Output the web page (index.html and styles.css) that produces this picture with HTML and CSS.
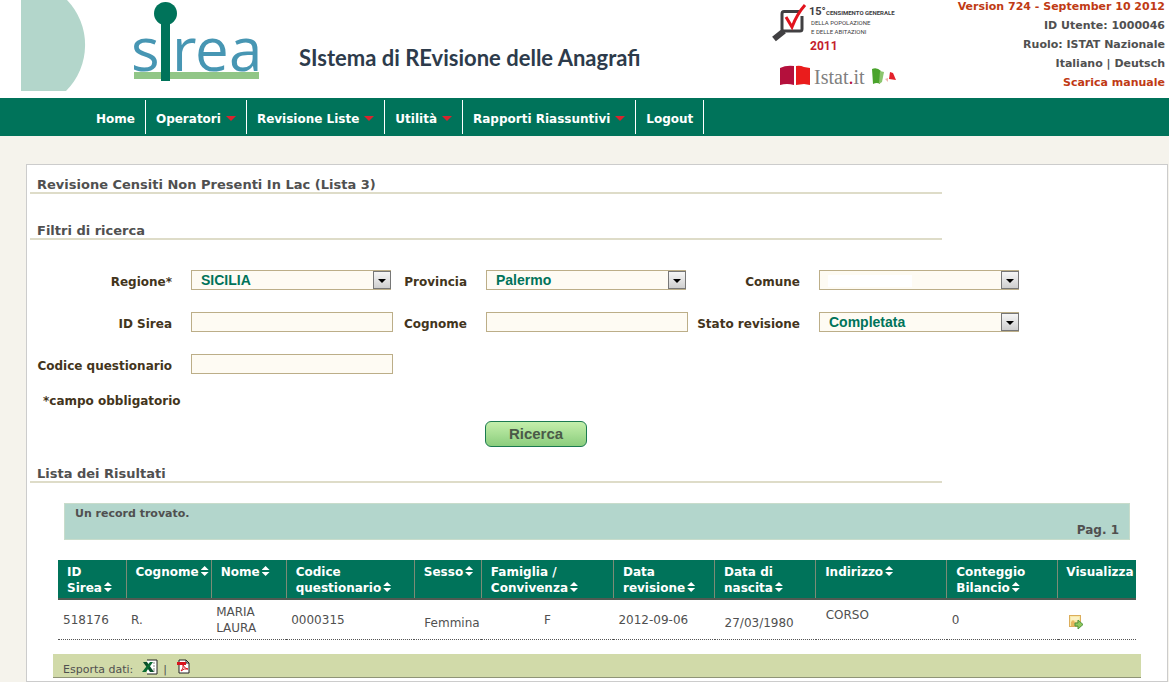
FILE: index.html
```html
<!DOCTYPE html>
<html lang="it">
<head>
<meta charset="utf-8">
<title>SIREA - Revisione Censiti</title>
<link rel="stylesheet" href="styles.css">
</head>
<body>
<header class="top">
  <svg class="disc" width="66" height="92" viewBox="0 0 66 92" aria-hidden="true"><path d="M0 0H46A65 65 0 0 1 45 91H0Z" fill="#b3d6cb"/></svg>
  <svg class="sirea" width="134" height="90" viewBox="127 0 134 90" role="img" aria-label="sirea">
    <rect x="134" y="72" width="125" height="7" fill="#91c687"/>
    <text class="sirea-word" x="131 172 195 229" y="71">srea</text>
    <rect x="161" y="14" width="9" height="67" fill="#00735a"/>
    <circle cx="165.500" cy="13.500" r="11.500" fill="#00735a"/>
  </svg>
  <h1 class="tagline">SIstema di REvisione delle Anagrafi</h1>
  <div class="partners">
    <svg width="132" height="90" viewBox="770 0 132 90" role="img" aria-label="15° Censimento generale, Istat.it">
      <path d="M799 11.500H784Q782 11.500 782 14V29Q782 31 784 31H800Q802 31 802 29V16" fill="none" stroke="#414042" stroke-width="3"/>
      <path d="M784 31L774 39" stroke="#414042" stroke-width="6"/>
      <path d="M786 17L792 27Q797 14 805 5" fill="none" stroke="#e2131d" stroke-width="3"/>
      <text class="din big" x="809" y="15">15°</text>
      <text class="din mid" x="826" y="15">CENSIMENTO GENERALE</text>
      <text class="din small" x="811" y="25">DELLA POPOLAZIONE</text>
      <text class="din small" x="811" y="34">E DELLE ABITAZIONI</text>
      <text class="din year" x="810" y="50">2011</text>
      <path d="M780 68Q786 65 794 66V85Q787 83 780 85Z" fill="#b4103c"/>
      <path d="M796 66Q800 65 804 67L810 68V85L804 84L796 85Z" fill="#ea1c1c"/>
      <text class="istat" x="814" y="84">Istat<tspan fill="#b4103c">.</tspan>it</text>
      <path d="M872 69Q877 67 881 71L880 84Q877 82 873 84Z" fill="#4aa32c"/>
      <path d="M880 71L884 72L882 82L879 84Z" fill="#8cc56e"/>
      <path d="M885 79L888 78V82Z" fill="#f0b6b0"/>
      <path d="M890 72L893 73L896 80L889 79Z" fill="#e3202a"/>
    </svg>
  </div>
  <div class="user">
    <span class="alert">Version 724 - September 10 2012</span>
    <span>ID Utente: 1000046</span>
    <span>Ruolo: ISTAT Nazionale</span>
    <span><a href="#">Italiano</a> | <a href="#">Deutsch</a></span>
    <a class="alert" href="#">Scarica manuale</a>
  </div>
</header>
<nav class="menu">
  <a href="#">Home</a>
  <a class="drop" href="#">Operatori</a>
  <a class="drop" href="#">Revisione Liste</a>
  <a class="drop" href="#">Utilità</a>
  <a class="drop" href="#">Rapporti Riassuntivi</a>
  <a href="#">Logout</a>
</nav>
<main class="panel">
  <h2>Revisione Censiti Non Presenti In Lac (Lista 3)</h2>
  <h2 class="second">Filtri di ricerca</h2>
  <form>
    <div class="fields">
      <label for="regione">Regione*</label>
      <span class="select"><select id="regione"><option>SICILIA</option></select></span>
      <label for="provincia">Provincia</label>
      <span class="select"><select id="provincia"><option>Palermo</option></select></span>
      <label for="comune">Comune</label>
      <span class="select"><select id="comune" class="masked"><option></option></select></span>
      <label for="idsirea">ID Sirea</label>
      <input id="idsirea" type="text">
      <label for="cognome">Cognome</label>
      <input id="cognome" type="text">
      <label for="stato">Stato revisione</label>
      <span class="select"><select id="stato"><option>Completata</option></select></span>
      <label for="codice">Codice questionario</label>
      <input id="codice" type="text">
    </div>
    <p class="note">*campo obbligatorio</p>
    <button class="search" type="button">Ricerca</button>
  </form>
  <h2 class="results">Lista dei Risultati</h2>
  <div class="banner"><span>Un record trovato.</span><span class="page">Pag. 1</span></div>
  <table>
    <colgroup><col class="c68"><col class="c85"><col class="c75"><col class="c128"><col class="c67"><col class="c132"><col class="c101"><col class="c101"><col class="c131"><col class="c111"><col class="c78"></colgroup>
    <thead>
      <tr>
        <th>ID <br><span class="sort">Sirea</span></th>
        <th><span class="sort">Cognome</span></th>
        <th><span class="sort">Nome</span></th>
        <th>Codice <br><span class="sort">questionario</span></th>
        <th><span class="sort">Sesso</span></th>
        <th>Famiglia / <br><span class="sort">Convivenza</span></th>
        <th>Data <br><span class="sort">revisione</span></th>
        <th>Data di <br><span class="sort">nascita</span></th>
        <th><span class="sort">Indirizzo</span></th>
        <th>Conteggio <br><span class="sort">Bilancio</span></th>
        <th>Visualizza</th>
      </tr>
    </thead>
    <tbody>
      <tr>
        <td>518176</td><td>R.</td><td>MARIA LAURA</td><td>0000315</td>
        <td class="low">Femmina</td><td class="center">F</td><td>2012-09-06</td>
        <td class="low">27/03/1980</td><td class="high">CORSO</td><td>0</td>
        <td class="view"><a href="#" aria-label="Visualizza"><svg width="16" height="16" viewBox="0 0 16 16"><rect x="1.500" y="1.500" width="11" height="11" fill="#f8e9a8" stroke="#dcae5c"/><path d="M3 12V8L5 6L8 9L10 7L12 9V12Z" fill="#e6b860"/><rect x="3" y="3" width="8" height="3" fill="#fbf1c4"/><path d="M7 9H10V6L15 10.500L10 15V12H7Z" fill="#8fc95c" stroke="#4f9340"/></svg></a></td>
      </tr>
    </tbody>
  </table>
  <div class="export">
    <span>Esporta dati:</span>
    <a class="file" href="#" aria-label="Excel"><svg width="16" height="16" viewBox="0 0 16 16"><path d="M5 1H15V15H5Z" fill="#fff"/><path d="M5 1H15V15H5" fill="none" stroke="#222"/><path d="M11 4H13M11 7H13M11 10H13M11 12H13" stroke="#8a8a8a"/><path d="M1 3H5L12 13H8Z" fill="#0b4f2b"/><path d="M11 3L4 13H0L8 3Z" fill="#0b6b33"/></svg></a>
    <span>|</span>
    <a class="file" href="#" aria-label="PDF"><svg width="16" height="16" viewBox="0 0 16 16"><path d="M3 1H10L13 4V14H3Z" fill="#fff" stroke="#222"/><path d="M10 1V4H13" fill="none" stroke="#222"/><rect x="1" y="3" width="9" height="3" fill="#d8131c"/><path d="M5 12Q8 9 7 6Q9 10 12 10Q8 9 5 12" fill="none" stroke="#d8131c"/></svg></a>
  </div>
</main>
</body>
</html>
```
FILE: styles.css
```css
* { box-sizing: border-box; }
body { margin: 0; background: #f5f3ec; color: #505050; font: 12px/16px "DejaVu Sans", Verdana, sans-serif; }
a { color: inherit; text-decoration: none; }
svg { display: block; }

.top { display: flex; height: 98px; background: #fff; overflow: hidden; }
.top svg { flex: none; }
.disc { margin-left: 21px; }
.sirea { margin-left: 40px; }
.sirea-word { font: 60px "Open Sans", sans-serif; fill: #4796b3; }
.tagline { margin: 46px 0 0 38px; font: bold 22px/24px Lato, sans-serif; color: #2d3b4b; white-space: nowrap; }
.partners { margin-left: auto; }
.user { display: flex; flex-direction: column; width: 267px; padding-right: 4px; margin-top: -3px; text-align: right; font-size: 11px; font-weight: bold; line-height: 19px; }
.alert { color: #c03a14; }
.din { font-family: Roboto, sans-serif; fill: #414042; }
.big { font-size: 11px; font-weight: bold; }
.mid { font-size: 6px; font-weight: bold; }
.small { font-size: 6px; }
.year { font-size: 12px; font-weight: bold; fill: #c4202c; }
.istat { font: 20px "Liberation Serif", serif; fill: #808080; }

.menu { display: flex; align-items: center; height: 38px; padding-left: 86px; background: #00735a; color: #fff; font-weight: bold; }
.menu a { display: flex; align-items: center; gap: 5px; height: 34px; padding: 3px 10px 0; border-right: 1px solid #fff; white-space: nowrap; }
.drop::after { content: ""; border: 5px solid transparent; border-top-color: #d9232e; border-bottom: 0; }

.panel { margin: 28px 1px 0 26px; padding-bottom: 3px; background: #fff; border: 1px solid #ccc; }
h2 { width: 80%; margin: 0 0 0 3px; padding: 12px 7px 0; border-bottom: 2px solid #dedcc8; font-size: 13px; line-height: 15px; }
.second { margin-top: 17px; }
.results { margin-top: 7px; }

form { padding: 30px 10px 0; color: #43351c; font-weight: bold; }
.fields { display: grid; grid-template-columns: 154px 202px 93px 202px 131px 202px; row-gap: 22px; }
.fields label { padding: 4px 19px 0 0; text-align: right; white-space: nowrap; line-height: 16px; }
.fields input { width: 202px; height: 20px; border: 1px solid #bcae88; background: #fefbf3; }
.select { position: relative; width: 200px; height: 20px; }
.select select { display: block; width: 100%; height: 20px; padding: 0 20px 0 9px; appearance: none; border: 1px solid #bcae88; border-radius: 0; background: #fefbf3; color: #00735a; font: bold 14px/18px "Liberation Sans", Arial, sans-serif; }
.select .masked { background: linear-gradient(#fff, #fff) 8px 4px / 84px 12px no-repeat #fefbf3; }
.select::before { content: ""; position: absolute; top: 1px; right: 0; box-sizing: border-box; width: 18px; height: 18px; border: 1px solid #777; background: linear-gradient(#f6f6f6, #cfcfcf); pointer-events: none; }
.select::after { content: ""; position: absolute; top: 9px; right: 5px; border: 4px solid transparent; border-top-color: #000; border-bottom: 0; pointer-events: none; }
.note { margin: 19px 0 12px 6px; }
.search { display: block; width: 102px; height: 26px; margin-left: 448px; border: 1px solid #1b7a50; border-radius: 6px; background: linear-gradient(#c4efab, #8bcd7d); color: #4a5a48; font: bold 15px/20px "Liberation Sans", Arial, sans-serif; }

.banner { display: flex; justify-content: space-between; height: 37px; margin: 20px 37px; padding: 2px 10px 1px; border: 1px solid #c8dccb; background: #b3d6cc; font-size: 11px; font-weight: bold; }
.page { align-self: flex-end; font-size: 12px; }

table { width: calc(100% - 62px); margin-left: 31px; table-layout: fixed; border-collapse: collapse; }
.c68 { width: 68px; } .c85 { width: 85px; } .c75 { width: 75px; } .c128 { width: 128px; } .c67 { width: 67px; } .c132 { width: 132px; }
.c101 { width: 101px; } .c131 { width: 131px; } .c111 { width: 111px; } .c78 { width: 78px; }
th { height: 39px; padding: 4px 0 2px 9px; border-right: 1px solid #7c8b76; border-bottom: 2px solid #4f5a52; background: #00735a; color: #fff; text-align: left; vertical-align: top; white-space: nowrap; }
th:last-child { padding-left: 8px; border-right: 0; }
.sort::after { content: ""; display: inline-block; width: 8px; height: 10px; margin-left: 2px; background: #fff; clip-path: polygon(50% 0, 100% 40%, 0 40%, 0 60%, 100% 60%, 50% 100%, 0 60%, 0 40%); }
td { height: 40px; padding: 1px 5px 0; border-bottom: 1px dotted #555; vertical-align: middle; }
td.low { padding: 7px 0 0 10px; }
td.high { padding: 0 0 9px 10px; }
.center { text-align: center; }
td.view { padding: 6px 0 0 10px; }

.export { display: flex; align-items: flex-start; gap: 5px; height: 24px; margin: 14px 26px 0; padding: 5px 10px 0; border-bottom: 1px solid #8f9476; background: #d1daa9; font-size: 11px; line-height: 22px; }
.file { margin-left: 4px; }
```
